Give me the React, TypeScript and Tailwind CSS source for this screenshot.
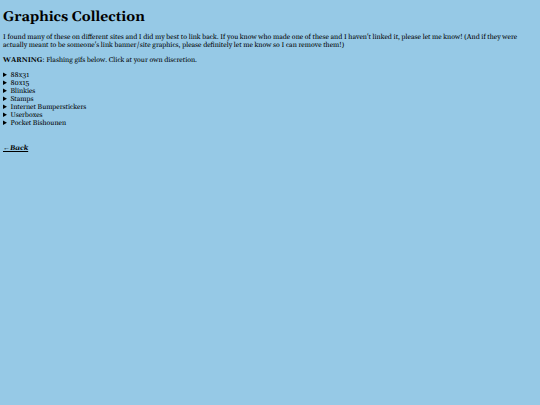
const categories: string[] = [
  '88x31',
  '80x15',
  'Blinkies',
  'Stamps',
  'Internet Bumperstickers',
  'Userboxes',
  'Pocket Bishounen',
];

export default function App() {
  return (
    <main className="min-h-screen bg-[#96c9e6] pt-2 pl-[3px] font-[Georgia,Gelasio,'Liberation_Serif',serif] text-[7px] leading-[8px] text-black [text-rendering:geometricPrecision]">
      <h1 className="text-[14px] leading-[18px] font-bold">Graphics Collection</h1>
      <p className="mt-2">
        I found many of these on different sites and I did my best to link back. If you know who made one of these and
        I haven't linked it, please let me know! (And if they were actually meant to be someone's link banner/site
        graphics, please definitely let me know so I can remove them!)
      </p>
      <p className="mt-[7px]">
        <b>WARNING</b>: Flashing gifs below. Click at your own discretion.
      </p>
      <div className="mt-[7px]">
        {categories.map((name) => (
          <details key={name}>
            <summary className="cursor-pointer">{name}</summary>
          </details>
        ))}
      </div>
      <p className="mt-4">
        <a href="#" className="font-bold italic underline">
          <span className="font-['Liberation_Serif',serif]">←</span>Back
        </a>
      </p>
    </main>
  );
}
